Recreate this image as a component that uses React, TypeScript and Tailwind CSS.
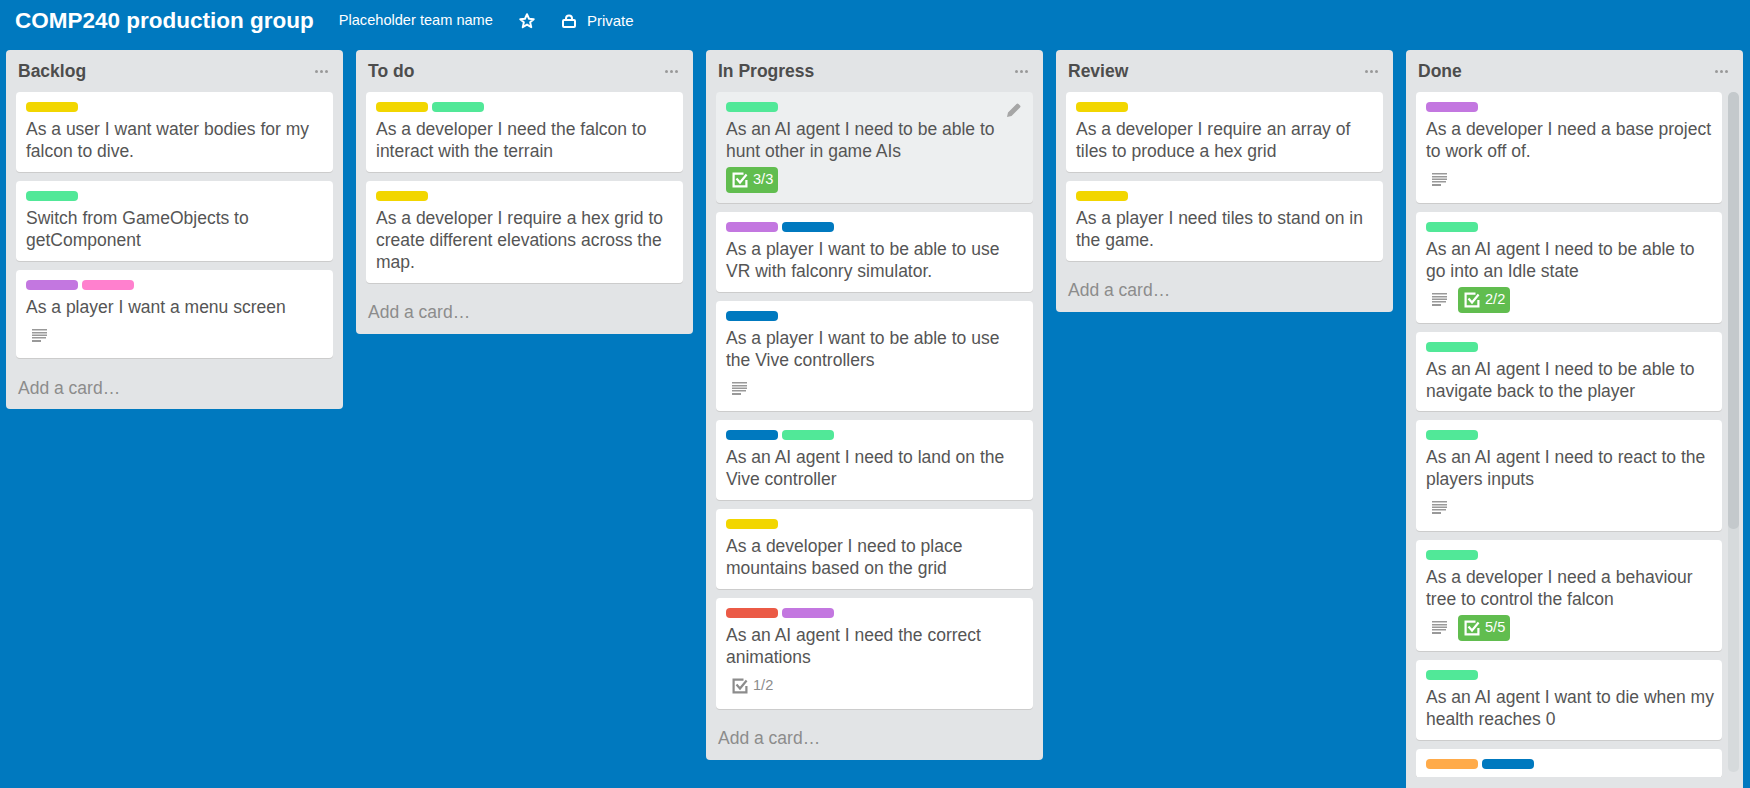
type Card = {
  labels: string[];
  text?: string;
  desc?: boolean;
  check?: string;
  done?: boolean;
  hover?: boolean;
};

const yellow = "bg-[#f2d600]";
const green = "bg-[#51e898]";
const purple = "bg-[#c377e0]";
const pink = "bg-[#ff80ce]";
const blue = "bg-[#0079bf]";
const red = "bg-[#eb5a46]";
const orange = "bg-[#ffab4a]";

const lists: { title: string; cards: Card[] }[] = [
  {
    title: "Backlog",
    cards: [
      { labels: [yellow], text: "As a user I want water bodies for my falcon to dive." },
      { labels: [green], text: "Switch from GameObjects to getComponent" },
      { labels: [purple, pink], text: "As a player I want a menu screen", desc: true },
    ],
  },
  {
    title: "To do",
    cards: [
      { labels: [yellow, green], text: "As a developer I need the falcon to interact with the terrain" },
      { labels: [yellow], text: "As a developer I require a hex grid to create different elevations across the map." },
    ],
  },
  {
    title: "In Progress",
    cards: [
      { labels: [green], text: "As an AI agent I need to be able to hunt other in game AIs", check: "3/3", done: true, hover: true },
      { labels: [purple, blue], text: "As a player I want to be able to use VR with falconry simulator." },
      { labels: [blue], text: "As a player I want to be able to use the Vive controllers", desc: true },
      { labels: [blue, green], text: "As an AI agent I need to land on the Vive controller" },
      { labels: [yellow], text: "As a developer I need to place mountains based on the grid" },
      { labels: [red, purple], text: "As an AI agent I need the correct animations", check: "1/2" },
    ],
  },
  {
    title: "Review",
    cards: [
      { labels: [yellow], text: "As a developer I require an array of tiles to produce a hex grid" },
      { labels: [yellow], text: "As a player I need tiles to stand on in the game." },
    ],
  },
];

const doneCards: Card[] = [
  { labels: [purple], text: "As a developer I need a base project to work off of.", desc: true },
  { labels: [green], text: "As an AI agent I need to be able to go into an Idle state", desc: true, check: "2/2", done: true },
  { labels: [green], text: "As an AI agent I need to be able to navigate back to the player" },
  { labels: [green], text: "As an AI agent I need to react to the players inputs", desc: true },
  { labels: [green], text: "As a developer I need a behaviour tree to control the falcon", desc: true, check: "5/5", done: true },
  { labels: [green], text: "As an AI agent I want to die when my health reaches 0" },
  { labels: [orange, blue] },
];

function DescIcon() {
  return (
    <svg width="15" height="13" viewBox="0 0 15 13" className="mb-[1px] text-[#999]" fill="currentColor">
      <rect x="0" y="0" width="15" height="1.5" />
      <rect x="0" y="3" width="15" height="1.5" />
      <rect x="0" y="5.500" width="15" height="1.5" />
      <rect x="0" y="8" width="14" height="1.5" />
      <rect x="0" y="11" width="9" height="2" />
    </svg>
  );
}

function CheckIcon() {
  return (
    <svg width="16" height="16" viewBox="0 0 16 16" fill="none" stroke="currentColor" strokeWidth="2.2">
      <path d="M11.500 1.600H1.600V14.400H14.400V8" />
      <path d="M4.500 6.500L8 10.500L14.600 2.500" />
    </svg>
  );
}

function Ticket({ card }: { card: Card }) {
  const hasBadges = card.desc || card.check;
  return (
    <div className={`relative shrink-0 rounded-[4px] pl-[10px] pr-[8px] pt-[10px] pb-[9.75px] shadow-[0_1px_0_#ccc] ${card.hover ? "bg-[#edeff0]" : "bg-white"}`}>
      <div className="flex gap-[4px]">
        {card.labels.map((label, index) => (
          <span key={index} className={`h-[10px] w-[52px] rounded-[4px] ${label}`} />
        ))}
      </div>
      {card.text && <div className="mt-[6px] text-[17.5px] leading-[22px] text-[#555]">{card.text}</div>}
      {hasBadges && (
        <div className="mt-[5px] flex h-[26px] items-center gap-[5px]">
          {card.desc && (
            <span className="flex h-[26px] w-[27px] items-center justify-center">
              <DescIcon />
            </span>
          )}
          {card.check && (
            <span className={`flex h-[26px] items-center gap-[5px] rounded-[4px] pl-[6px] pr-[5px] text-[14.6px] ${card.done ? "bg-[#61bd4f] text-white" : "text-[#8c8c8c]"}`}>
              <CheckIcon />
              {card.check}
            </span>
          )}
        </div>
      )}
      {card.hover && (
        <svg width="14" height="14" viewBox="0 0 14 14" className="absolute right-[12px] top-[11px] text-[#a6a6a6]" fill="currentColor">
          <path d="M0 14l1-4.500L9.500 1a1.400 1.400 0 0 1 2 0l1.500 1.500a1.400 1.400 0 0 1 0 2L4.500 13z" />
        </svg>
      )}
    </div>
  );
}

function ListHeader({ title }: { title: string }) {
  return (
    <div className="flex h-[42px] shrink-0 items-center justify-between pl-[12px] pr-[12px]">
      <h2 className="text-[17.5px] font-bold text-[#4d4d4d]">{title}</h2>
      <span className="mr-[3px] flex gap-[2px]">
        <span className="h-[3px] w-[3px] rounded-full bg-[#999]" />
        <span className="h-[3px] w-[3px] rounded-full bg-[#999]" />
        <span className="h-[3px] w-[3px] rounded-full bg-[#999]" />
      </span>
    </div>
  );
}

export default function App() {
  return (
    <div className="h-[788px] w-[1750px] overflow-hidden bg-[#0079bf] font-['Liberation_Sans',Arial,sans-serif]">
      <header className="flex h-[50px] items-center pb-[8px] pl-[15px] text-white">
        <h1 className="text-[22.5px] font-bold">COMP240 production group</h1>
        <span className="ml-[25px] text-[14.6px]">Placeholder team name</span>
        <svg width="18" height="18" viewBox="0 0 24 24" fill="none" stroke="currentColor" strokeWidth="2.6" strokeLinejoin="round" className="ml-[25px]">
          <path d="M12 3l2.700 6 6.300.6-4.800 4.200 1.500 6.400L12 16.800l-5.700 3.400 1.500-6.400L3 9.600 9.300 9z" />
        </svg>
        <svg width="14" height="14" viewBox="0 0 14 14" fill="none" stroke="currentColor" strokeWidth="2" className="mb-[1px] ml-[26px]">
          <rect x="1" y="6" width="12" height="7" rx="1" />
          <path d="M4 6V4.500a3 3 0 0 1 6 0V6" />
        </svg>
        <span className="ml-[11px] text-[15px]">Private</span>
      </header>
      <main className="flex items-start gap-[13px] pl-[6px]">
        {lists.map((list) => (
          <section key={list.title} className="flex w-[337px] flex-col rounded-[4px] bg-[#e2e4e6] pb-[3.5px]">
            <ListHeader title={list.title} />
            <div className="flex flex-col gap-[9px] px-[10px]">
              {list.cards.map((card, index) => (
                <Ticket key={index} card={card} />
              ))}
            </div>
            <div className="mt-[11.5px] flex h-[36px] items-center pl-[12px] text-[17.5px] text-[#8c8c8c]">Add a card…</div>
          </section>
        ))}
        <section className="flex h-[745px] w-[337px] flex-col rounded-[4px] bg-[#e2e4e6]">
          <ListHeader title="Done" />
          <div className="flex h-[685px] gap-[6px] pl-[10px] pr-[4px]">
            <div className="flex min-w-0 flex-1 flex-col gap-[9px] overflow-hidden">
              {doneCards.map((card, index) => (
                <Ticket key={index} card={card} />
              ))}
            </div>
            <div className="h-[680px] w-[11px] shrink-0 overflow-hidden rounded-[5px] bg-[#d6dadc]">
              <div className="h-[437px] rounded-[5px] bg-[#c4c9cc]" />
            </div>
          </div>
        </section>
      </main>
    </div>
  );
}
